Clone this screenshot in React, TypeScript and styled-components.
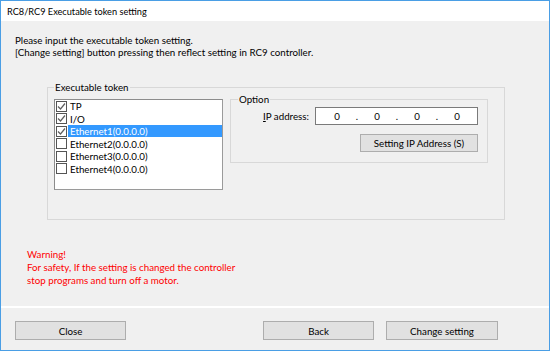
import React, {FC} from 'react';
import styled, {createGlobalStyle} from "styled-components";

const GlobalStyle = createGlobalStyle`
  html, body {
    margin: 0;
    padding: 0;
    background: #ffffff;
  }

  body {
    font-family: Lato, "Liberation Sans", sans-serif;
    font-size: 9.75px;
    color: #000;
  }
`

type Token = { label: string, checked: boolean, selected?: boolean }

const tokens: Token[] = [
    {label: 'TP', checked: true},
    {label: 'I/O', checked: true},
    {label: 'Ethernet1(0.0.0.0)', checked: true, selected: true},
    {label: 'Ethernet2(0.0.0.0)', checked: false},
    {label: 'Ethernet3(0.0.0.0)', checked: false},
    {label: 'Ethernet4(0.0.0.0)', checked: false},
]

const CheckBox: FC<{ checked: boolean }> = ({checked}) => (
    <Box>
        {checked && <svg width="9" height="9" viewBox="0 0 9 9">
            <polyline points="1,4.5 3.5,7 8,1.5" fill="none" stroke="#5f5f5f" strokeWidth="1.2"/>
        </svg>}
    </Box>
)

const App: FC = () => {
    return <>
        <GlobalStyle/>
        <Window>
            <TitleBar>RC8/RC9 Executable token setting</TitleBar>
            <Body>
                <Intro>
                    <div>Please input the executable token setting.</div>
                    <div>[Change setting] button pressing then reflect setting in RC9 controller.</div>
                </Intro>
                <TokenGroup>
                    <Legend>Executable token</Legend>
                    <GroupRow>
                        <ListBox>
                            {tokens.map(t => (
                                <ListItem key={t.label}>
                                    <CheckBox checked={t.checked}/>
                                    <ItemLabel $selected={!!t.selected}>{t.label}</ItemLabel>
                                </ListItem>
                            ))}
                        </ListBox>
                        <OptionGroup>
                            <OptionLegend>Option</OptionLegend>
                            <IpRow>
                                <IpLabel><u>I</u>P address:</IpLabel>
                                <IpBox>
                                    {[0, 1, 2, 3].map(i => (
                                        <IpCell key={i}>
                                            <Octet>0</Octet>
                                            {i < 3 && <Dot>.</Dot>}
                                        </IpCell>
                                    ))}
                                </IpBox>
                            </IpRow>
                            <Button $width={118} $height={18}>Setting IP Address (S)</Button>
                        </OptionGroup>
                    </GroupRow>
                </TokenGroup>
                <Warning>
                    <div>Warning!</div>
                    <div>For safety, If the setting is changed the controller</div>
                    <div>stop programs and turn off a motor.</div>
                </Warning>
            </Body>
            <Footer>
                <Button $width={111} $height={19}>Close</Button>
                <FooterRight>
                    <Button $width={111} $height={19}>Back</Button>
                    <Button $width={112} $height={19}>Change setting</Button>
                </FooterRight>
            </Footer>
        </Window>
    </>
};
export default App;

const Window = styled.div`
  width: 550px;
  height: 351px;
  box-sizing: border-box;
  border: 1px solid #4a9ee5;
  display: flex;
  flex-direction: column;
  background: #f0f0f0;
`

const TitleBar = styled.div`
  height: 20px;
  flex: none;
  background: #fff;
  display: flex;
  align-items: center;
  padding-left: 6px;
  font-size: 9.2px;
`

const Body = styled.div`
  flex: 1;
  padding: 13px 14px 0 14px;
`

const Intro = styled.div`
  line-height: 12px;
`

const TokenGroup = styled.fieldset`
  margin: 23px 0 0 32px;
  width: 458px;
  box-sizing: border-box;
  border: 1px solid #d8d8d8;
  padding: 0 6px 29px 6px;
`

const Legend = styled.legend`
  padding: 0 1px;
  line-height: 12px;
`

const GroupRow = styled.div`
  display: flex;
  align-items: flex-start;
  gap: 7px;
`

const ListBox = styled.div`
  margin-top: 6px;
  width: 169px;
  height: 91px;
  box-sizing: border-box;
  background: #fff;
  border: 1px solid #8c8c8c;
  border-right-color: #9a9a9a;
  border-bottom-color: #9a9a9a;
`

const ListItem = styled.div`
  height: 12.5px;
  display: flex;
  align-items: center;
  padding-left: 1px;
`

const Box = styled.span`
  width: 11px;
  height: 11px;
  box-sizing: border-box;
  border: 1px solid #555;
  background: #fff;
  display: flex;
  align-items: center;
  justify-content: center;
  flex: none;
  margin-right: 1px;
`

const ItemLabel = styled.span<{ $selected: boolean }>`
  flex: 1;
  height: 12px;
  line-height: 12px;
  padding-left: 2px;
  background: ${p => p.$selected ? '#3399ff' : 'transparent'};
  color: ${p => p.$selected ? '#fff' : '#000'};
`

const OptionGroup = styled.fieldset`
  margin: 0;
  width: 258px;
  height: 70px;
  box-sizing: border-box;
  border: 1px solid #d8d8d8;
  padding: 2px 9px 0 7px;
  display: flex;
  flex-direction: column;
  align-items: flex-end;
  gap: 9px;
`

const OptionLegend = styled.legend`
  padding: 0 1px;
  line-height: 12px;
`

const IpRow = styled.div`
  display: flex;
  align-items: center;
  gap: 6px;
`

const IpLabel = styled.span`
  line-height: 12px;
`

const IpBox = styled.div`
  width: 163px;
  height: 18px;
  box-sizing: border-box;
  background: #fff;
  border: 1px solid #7a7a7a;
  display: flex;
  align-items: center;
  padding-left: 3px;
`

const IpCell = styled.div`
  display: flex;
`

const Octet = styled.span`
  width: 36px;
  text-align: center;
`

const Dot = styled.span`
  width: 4px;
  text-align: center;
`

const Button = styled.div<{ $width: number, $height: number }>`
  width: ${p => p.$width}px;
  height: ${p => p.$height}px;
  box-sizing: border-box;
  background: #e1e1e1;
  border: 1px solid #adadad;
  display: flex;
  align-items: center;
  justify-content: center;
  flex: none;
`

const Warning = styled.div`
  margin: 28px 0 0 12px;
  line-height: 13px;
  color: #ff0000;
`

const Footer = styled.div`
  height: 44px;
  flex: none;
  box-sizing: border-box;
  border-top: 2px solid #fff;
  padding: 13px 51px 0 14px;
  display: flex;
  align-items: flex-start;
  justify-content: space-between;
`

const FooterRight = styled.div`
  display: flex;
  gap: 12px;
`
